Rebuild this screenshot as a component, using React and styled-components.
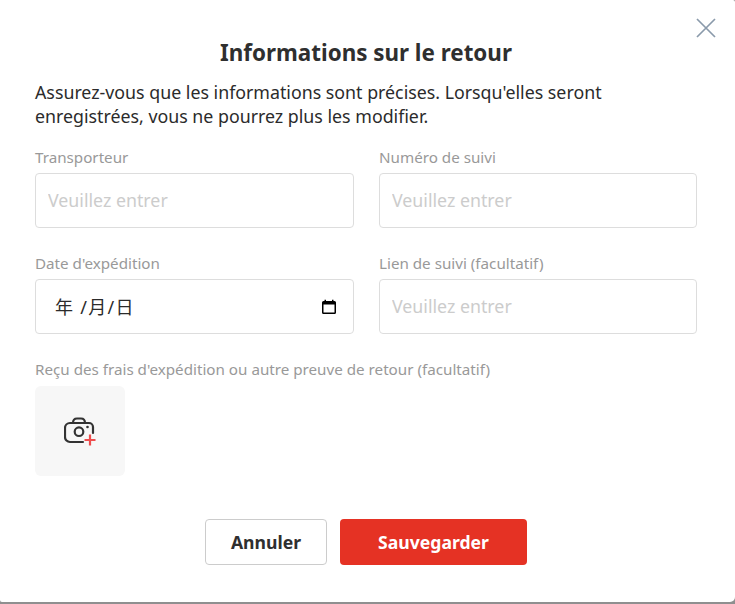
import React from "react";
import styled, { createGlobalStyle } from "styled-components";

const GlobalStyle = createGlobalStyle`
  html, body {
    margin: 0;
    padding: 0;
    height: 100%;
    background: #8f8f8f;
  }
  * {
    box-sizing: border-box;
  }
`;

export default function App() {
  return (
    <>
      <GlobalStyle />
      <Modal>
        <CloseButton aria-label="Fermer">
          <svg width="20" height="20" viewBox="0 0 20 20" fill="none">
            <path d="M1 1L19 19M19 1L1 19" stroke="#8a9aab" strokeWidth="1.7" />
          </svg>
        </CloseButton>
        <Title>Informations sur le retour</Title>
        <Description>
          Assurez-vous que les informations sont précises. Lorsqu'elles seront
          enregistrées, vous ne pourrez plus les modifier.
        </Description>
        <FieldGrid>
          <Field>
            <Label>Transporteur</Label>
            <TextInput placeholder="Veuillez entrer" />
          </Field>
          <Field>
            <Label>Numéro de suivi</Label>
            <TextInput placeholder="Veuillez entrer" />
          </Field>
          <Field>
            <Label>Date d'expédition</Label>
            <DateBox>
              <DateText>年 /月/日</DateText>
              <svg width="16" height="16" viewBox="0 0 16 16" fill="none">
                <path d="M1 3.5A1.5 1.5 0 0 1 2.500 2H3.500V0.800H5V2H11V0.800H12.500V2H13.500A1.500 1.500 0 0 1 15 3.500V13.500A1.500 1.500 0 0 1 13.500 15H2.500A1.500 1.500 0 0 1 1 13.500Z" fill="#000" />
                <rect x="2.500" y="5.500" width="11" height="8" fill="#fff" />
              </svg>
            </DateBox>
          </Field>
          <Field>
            <Label>Lien de suivi (facultatif)</Label>
            <TextInput placeholder="Veuillez entrer" />
          </Field>
        </FieldGrid>
        <Label>Reçu des frais d'expédition ou autre preuve de retour (facultatif)</Label>
        <UploadBox aria-label="Ajouter une photo">
          <svg width="32" height="30" viewBox="0 0 32 30" fill="none">
            <path
              d="M19 26H6A5 5 0 0 1 1 21V12A5 5 0 0 1 6 7H25A4 4 0 0 1 29 11V17"
              stroke="#333"
              strokeWidth="2.200"
              strokeLinecap="round"
            />
            <path d="M9 7C9 4 10.500 2.500 13 2.500H17C19.500 2.500 21 4 21 7" stroke="#333" strokeWidth="2.200" />
            <circle cx="15" cy="15.700" r="4.300" stroke="#333" strokeWidth="2.200" />
            <circle cx="23.500" cy="11" r="1.300" fill="#333" />
            <path d="M26 18.500V29.500M20.500 24H31.500" stroke="#ee4d4d" strokeWidth="2.200" />
          </svg>
        </UploadBox>
        <Actions>
          <CancelButton>Annuler</CancelButton>
          <SaveButton>Sauvegarder</SaveButton>
        </Actions>
      </Modal>
    </>
  );
}

const Modal = styled.div`
  position: relative;
  width: 735px;
  height: 602px;
  padding: 37px 38px 0 35px;
  background: #ffffff;
  border-radius: 0 2px 5px 2px;
  font-family: "Noto Sans", "Noto Sans CJK SC", sans-serif;
  color: #2f2f2f;
  overflow: hidden;
`;

const CloseButton = styled.button`
  position: absolute;
  top: 18px;
  right: 19px;
  display: flex;
  padding: 0;
  background: none;
  border: 0;
`;

const Title = styled.h1`
  margin: 0 0 11px;
  font-size: 22.400px;
  line-height: 32px;
  font-weight: 700;
  text-align: center;
  color: #2f2f2f;
`;

const Description = styled.p`
  margin: 0 0 18px;
  max-width: 600px;
  font-size: 17.800px;
  line-height: 24px;
  color: #2b2b2b;
`;

const FieldGrid = styled.div`
  display: grid;
  grid-template-columns: 319px 318px;
  column-gap: 25px;
  row-gap: 24px;
  margin-bottom: 24px;
`;

const Field = styled.div`
  display: flex;
  flex-direction: column;
`;

const Label = styled.label`
  display: block;
  height: 22px;
  margin-bottom: 5px;
  font-size: 15.200px;
  line-height: 23px;
  color: #999999;
`;

const TextInput = styled.input`
  width: 100%;
  height: 55px;
  padding: 0 12px 2px;
  border: 1px solid #dddddd;
  border-radius: 4px;
  outline: none;
  font-family: inherit;
  font-size: 17.800px;
  color: #2f2f2f;

  &::placeholder {
    color: #cccccc;
    opacity: 1;
  }
`;

const DateBox = styled.div`
  display: flex;
  align-items: center;
  justify-content: space-between;
  height: 55px;
  padding: 0 16px 0 19px;
  border: 1px solid #dddddd;
  border-radius: 4px;
`;

const DateText = styled.span`
  margin-bottom: 2px;
  font-size: 18px;
  letter-spacing: 1.300px;
  color: #2b2b2b;
`;

const UploadBox = styled.div`
  display: flex;
  align-items: center;
  justify-content: center;
  width: 90px;
  height: 90px;
  margin-top: 6px;
  background: #f7f7f7;
  border-radius: 6px;
`;

const Actions = styled.div`
  display: flex;
  justify-content: center;
  gap: 13px;
  margin-top: 43px;
`;

const ActionButton = styled.button`
  height: 46px;
  border-radius: 4px;
  font-family: inherit;
  font-size: 17.600px;
  font-weight: 700;
`;

const CancelButton = styled(ActionButton)`
  width: 122px;
  background: #ffffff;
  border: 1px solid #cccccc;
  color: #2f2f2f;
`;

const SaveButton = styled(ActionButton)`
  width: 187px;
  background: #e53224;
  border: 0;
  color: #ffffff;
`;
